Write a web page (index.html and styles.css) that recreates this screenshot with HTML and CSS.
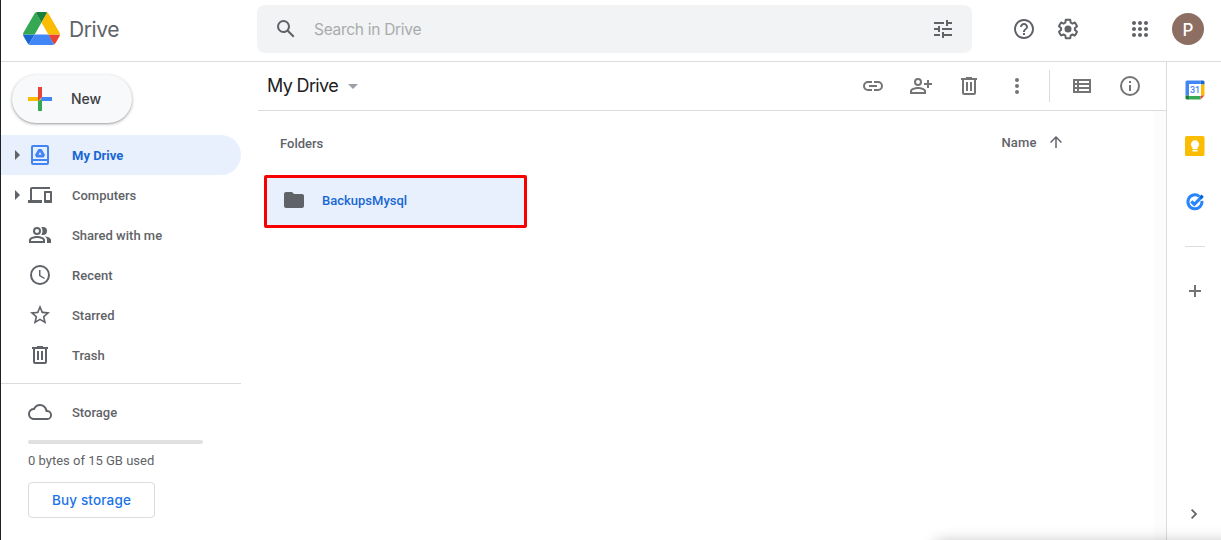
FILE: index.html
```html
<!DOCTYPE html>
<html lang="en">
<head>
<meta charset="utf-8">
<title>My Drive</title>
<link rel="stylesheet" href="styles.css">
</head>
<body>
<header class="header">
  <div class="brand">
    <svg class="logo" viewBox="0 0 87.3 78"><path d="m6.6 66.85 3.85 6.65c.8 1.4 1.95 2.5 3.3 3.3l13.75-23.8h-27.5c0 1.55.4 3.1 1.2 4.5z" fill="#1967d2"/><path d="m43.65 25-13.75-23.8c-1.35.8-2.5 1.9-3.3 3.3l-25.4 44a9.06 9.06 0 0 0 -1.2 4.5h27.5z" fill="#34a853"/><path d="m73.55 76.8c1.35-.8 2.5-1.9 3.3-3.3l1.6-2.75 7.65-13.25c.8-1.4 1.2-2.95 1.2-4.5h-27.5l5.85 11.5z" fill="#ea4335"/><path d="m43.65 25 13.75-23.8c-1.35-.8-2.9-1.2-4.5-1.2h-18.5c-1.6 0-3.15.45-4.5 1.2z" fill="#188038"/><path d="m59.8 53h-32.3l-13.75 23.8c1.35.8 2.9 1.2 4.5 1.2h50.8c1.6 0 3.15-.45 4.5-1.2z" fill="#4285f4"/><path d="m73.4 26.5-12.7-22c-.8-1.4-1.95-2.5-3.3-3.3l-13.75 23.8 16.15 28h27.45c0-1.55-.4-3.1-1.2-4.5z" fill="#fbbc04"/></svg>
    <span class="brand-name">Drive</span>
  </div>
  <div class="search">
    <svg class="icon" viewBox="0 0 24 24"><path d="M20.49 19l-5.73-5.73C15.53 12.2 16 10.91 16 9.5A6.5 6.5 0 1 0 9.5 16c1.41 0 2.7-.47 3.77-1.24L19 20.49 20.49 19zM5 9.5C5 7.01 7.01 5 9.5 5S14 7.01 14 9.5 11.99 14 9.5 14 5 11.99 5 9.5z"/></svg>
    <span class="placeholder">Search in Drive</span>
    <svg class="icon" viewBox="0 0 24 24"><path d="M3 17v2h6v-2H3zM3 5v2h10V5H3zm10 16v-2h8v-2h-8v-2h-2v6h2zM7 9v2H3v2h4v2h2V9H7zm14 4v-2H11v2h10zm-6-4h2V7h4V5h-4V3h-2v6z"/></svg>
  </div>
  <div class="account">
    <svg class="icon" viewBox="0 0 24 24"><path d="M11 18h2v-2h-2v2zm1-16C6.48 2 2 6.48 2 12s4.48 10 10 10 10-4.48 10-10S17.52 2 12 2zm0 18c-4.41 0-8-3.59-8-8s3.59-8 8-8 8 3.59 8 8-3.59 8-8 8zm0-14c-2.21 0-4 1.79-4 4h2c0-1.1.9-2 2-2s2 .9 2 2c0 2-3 1.75-3 5h2c0-2.25 3-2.5 3-5 0-2.21-1.79-4-4-4z"/></svg>
    <svg class="icon" viewBox="0 0 24 24"><path d="M13.85 22.25h-3.7c-.74 0-1.36-.54-1.45-1.27l-.27-1.89c-.27-.14-.53-.29-.79-.46l-1.8.72c-.7.26-1.47-.03-1.81-.65L2.2 15.53c-.35-.66-.2-1.44.36-1.88l1.53-1.19c-.01-.15-.02-.3-.02-.46 0-.15.01-.31.02-.46l-1.52-1.19c-.59-.45-.74-1.26-.37-1.88l1.85-3.19c.34-.62 1.11-.9 1.79-.63l1.81.73c.26-.17.52-.32.78-.46l.27-1.91c.09-.7.71-1.25 1.44-1.25h3.7c.74 0 1.36.54 1.45 1.27l.27 1.89c.27.14.53.29.79.46l1.8-.72c.71-.26 1.48.03 1.82.65l1.84 3.18c.36.66.2 1.44-.36 1.88l-1.52 1.19c.01.15.02.3.02.46s-.01.31-.02.46l1.52 1.19c.56.45.72 1.23.37 1.86l-1.86 3.22c-.34.62-1.11.9-1.8.63l-1.8-.72c-.26.17-.52.32-.78.46l-.27 1.91c-.1.68-.72 1.22-1.46 1.22zm-3.23-2h2.76l.37-2.55.53-.22c.44-.18.88-.44 1.34-.78l.45-.34 2.38.96 1.38-2.4-2.03-1.58.07-.56c.03-.26.06-.51.06-.78s-.03-.53-.06-.78l-.07-.56 2.03-1.58-1.39-2.4-2.39.96-.45-.35c-.42-.32-.87-.58-1.33-.77l-.52-.22-.37-2.55h-2.76l-.37 2.55-.53.21c-.44.19-.88.44-1.34.79l-.45.33-2.38-.95-1.39 2.39 2.03 1.58-.07.56a7 7 0 0 0-.06.79c0 .26.02.53.06.78l.07.56-2.03 1.58 1.38 2.4 2.39-.96.45.35c.43.33.86.58 1.33.77l.53.22.38 2.55z"/><circle cx="12" cy="12" r="3.5"/></svg>
    <svg class="icon apps" viewBox="0 0 24 24"><path d="M6 8c1.1 0 2-.9 2-2s-.9-2-2-2-2 .9-2 2 .9 2 2 2zm6 12c1.1 0 2-.9 2-2s-.9-2-2-2-2 .9-2 2 .9 2 2 2zm-6 0c1.1 0 2-.9 2-2s-.9-2-2-2-2 .9-2 2 .9 2 2 2zm0-6c1.1 0 2-.9 2-2s-.9-2-2-2-2 .9-2 2 .9 2 2 2zm6 0c1.1 0 2-.9 2-2s-.9-2-2-2-2 .9-2 2 .9 2 2 2zm4-8c0 1.1.9 2 2 2s2-.9 2-2-.9-2-2-2-2 .9-2 2zm-4 2c1.1 0 2-.9 2-2s-.9-2-2-2-2 .9-2 2 .9 2 2 2zm6 6c1.1 0 2-.9 2-2s-.9-2-2-2-2 .9-2 2 .9 2 2 2zm0 6c1.1 0 2-.9 2-2s-.9-2-2-2-2 .9-2 2 .9 2 2 2z"/></svg>
    <span class="avatar">P</span>
  </div>
</header>
<div class="body">
  <nav class="sidebar">
    <button class="new">
      <svg viewBox="0 0 24 24"><path fill="#ea4335" d="M10 0h4v10l-4 4z"/><path fill="#4285f4" d="M24 10v4H12l2-4z"/><path fill="#34a853" d="M10 14l4-2v12h-4z"/><path fill="#fbbc04" d="M0 10h10v4H0z"/><path fill="#ea4335" d="M10 10h4l-4 4z"/></svg>
      <span>New</span>
    </button>
    <a class="item selected"><i class="caret"></i>
      <svg class="icon" viewBox="0 0 24 24"><path fill-rule="evenodd" d="M5 2h14a2 2 0 0 1 2 2v16a2 2 0 0 1-2 2H5a2 2 0 0 1-2-2V4c0-1.1.9-2 2-2zm0 2v12h14V4zm0 14v2h14v-2z"/><path fill-rule="evenodd" d="M10.400 6h3.200l3.500 6-1.500 2.500H8.400L6.900 12zM12 9l-1.500 2.700h3z"/></svg>
      <span>My Drive</span></a>
    <a class="item"><i class="caret"></i>
      <svg class="icon" viewBox="0 0 24 24"><path d="M4 6h18V4H4c-1.1 0-2 .9-2 2v11H0v3h14v-3H4V6zm19 2h-6c-.55 0-1 .45-1 1v10c0 .55.45 1 1 1h6c.55 0 1-.45 1-1V9c0-.55-.45-1-1-1zm-1 9h-4v-7h4v7z"/></svg>
      <span>Computers</span></a>
    <a class="item"><i class="caret none"></i>
      <svg class="icon" viewBox="0 0 24 24"><path d="M9 12a4 4 0 1 0 0-8 4 4 0 0 0 0 8zm0-6a2 2 0 1 1 0 4 2 2 0 0 1 0-4zm0 7c-2.67 0-8 1.34-8 4v3h16v-3c0-2.66-5.33-4-8-4zm6 5H3v-1c0-.72 3.1-2 6-2s6 1.28 6 2v1zM15 12a4 4 0 1 0 0-8c-.6 0-1.15.14-1.66.36A6 6 0 0 1 14.5 8a6 6 0 0 1-1.16 3.64c.51.22 1.06.36 1.66.36zM16.5 13.2c1.5.9 2.5 2.1 2.5 3.8v3h4v-3c0-2.1-3.3-3.4-6.5-3.8z"/></svg>
      <span>Shared with me</span></a>
    <a class="item"><i class="caret none"></i>
      <svg class="icon" viewBox="0 0 24 24"><path d="M12 2a10 10 0 1 0 0 20 10 10 0 0 0 0-20zm0 18a8 8 0 1 1 0-16 8 8 0 0 1 0 16zm.5-13H11v6l5.2 3.1.8-1.2-4.5-2.7z"/></svg>
      <span>Recent</span></a>
    <a class="item"><i class="caret none"></i>
      <svg class="icon" viewBox="0 0 24 24"><path d="M22 9.24l-7.19-.62L12 2 9.19 8.63 2 9.24l5.46 4.73L5.82 21 12 17.27 18.18 21l-1.63-7.03zM12 15.4l-3.76 2.27 1-4.28-3.32-2.88 4.38-.38L12 6.1l1.71 4.04 4.38.38-3.32 2.88 1 4.28z"/></svg>
      <span>Starred</span></a>
    <a class="item"><i class="caret none"></i>
      <svg class="icon" viewBox="0 0 24 24"><path d="M15 4V3H9v1H4v2h1v13a2 2 0 0 0 2 2h10a2 2 0 0 0 2-2V6h1V4zm2 15H7V6h10zM9 8h2v9H9zm4 0h2v9h-2z"/></svg>
      <span>Trash</span></a>
    <div class="storage">
      <a class="item"><i class="caret none"></i>
        <svg class="icon" viewBox="0 0 24 24"><path d="M19.35 10.04A7.49 7.49 0 0 0 12 4C9.11 4 6.6 5.64 5.35 8.04A5.99 5.99 0 0 0 0 14c0 3.31 2.69 6 6 6h13c2.76 0 5-2.24 5-5 0-2.64-2.05-4.78-4.65-4.96zM19 18H6a4 4 0 0 1-.44-7.97l1.07-.11.5-.95A5.48 5.48 0 0 1 12 6c2.62 0 4.88 1.86 5.39 4.43l.3 1.5 1.53.11A2.98 2.98 0 0 1 19 18z"/></svg>
        <span>Storage</span></a>
      <div class="meter"></div>
      <p class="usage">0 bytes of 15 GB used</p>
      <button class="buy">Buy storage</button>
    </div>
  </nav>
  <main class="main">
    <div class="toolbar">
      <h1 class="title">My Drive</h1><i class="dropdown"></i>
      <div class="actions">
        <svg class="icon" viewBox="0 0 24 24"><path d="M17 7h-4v2h4a3 3 0 0 1 0 6h-4v2h4a5 5 0 0 0 0-10zm-6 8H7a3 3 0 0 1 0-6h4V7H7a5 5 0 0 0 0 10h4zm-3-4h8v2H8z"/></svg>
        <svg class="icon" viewBox="0 0 24 24"><path d="M9 12a4 4 0 1 0 0-8 4 4 0 0 0 0 8zm0-6a2 2 0 1 1 0 4 2 2 0 0 1 0-4zm0 7c-2.67 0-8 1.34-8 4v3h16v-3c0-2.66-5.33-4-8-4zm6 5H3v-1c0-.72 3.1-2 6-2s6 1.28 6 2zM20 9V6h-2v3h-3v2h3v3h2v-3h3V9z"/></svg>
        <svg class="icon" viewBox="0 0 24 24"><path d="M15 4V3H9v1H4v2h1v13a2 2 0 0 0 2 2h10a2 2 0 0 0 2-2V6h1V4zm2 15H7V6h10zM9 8h2v9H9zm4 0h2v9h-2z"/></svg>
        <svg class="icon" viewBox="0 0 24 24"><circle cx="12" cy="6" r="2"/><circle cx="12" cy="12" r="2"/><circle cx="12" cy="18" r="2"/></svg>
        <span class="separator"></span>
        <svg class="icon" viewBox="0 0 24 24"><path fill-rule="evenodd" d="M3 5h18v14H3zm2 2v2h2V7zm4 0v2h10V7zm-4 4v2h2v-2zm4 0v2h10v-2zm-4 4v2h2v-2zm4 0v2h10v-2z"/></svg>
        <svg class="icon" viewBox="0 0 24 24"><path d="M11 7h2v2h-2zm0 4h2v6h-2zm1-9a10 10 0 1 0 0 20 10 10 0 0 0 0-20zm0 18a8 8 0 1 1 0-16 8 8 0 0 1 0 16z"/></svg>
      </div>
    </div>
    <div class="content">
      <section class="files">
        <div class="list-head">
          <h2>Folders</h2>
          <div class="sort"><span>Name</span><svg viewBox="0 0 24 24"><path d="M4 12l1.41 1.41L11 7.83V20h2V7.83l5.58 5.59L20 12l-8-8z"/></svg></div>
        </div>
        <div class="folder">
          <svg class="icon" viewBox="0 0 24 24"><path d="M10 4H4c-1.1 0-2 .9-2 2v12c0 1.1.9 2 2 2h16c1.1 0 2-.9 2-2V8c0-1.1-.9-2-2-2h-8z"/></svg>
          <span>BackupsMysql</span>
        </div>
      </section>
      <div class="scrollbar"></div>
    </div>
  </main>
  <aside class="panel">
    <svg class="app" viewBox="0 0 20 20"><path fill="#4285f4" d="M2 .5h13.500v4H4.500v11H.5V2A1.500 1.500 0 0 1 2 .5z"/><path fill="#1967d2" d="M15.500.5H18A1.500 1.500 0 0 1 19.500 2v2.500h-4z"/><path fill="#fbbc04" d="M15.500 4.500h4v11h-4z"/><path fill="#34a853" d="M4.500 15.500h11v4h-11z"/><path fill="#188038" d="M.5 15.500h4v4H2A1.500 1.500 0 0 1 .5 18z"/><path fill="#ea4335" d="M15.500 15.500h4l-4 4z"/><path fill="#fff" d="M4 4h12v12H4z"/><text class="date" x="10" y="13.200" text-anchor="middle">31</text></svg>
    <svg class="app" viewBox="0 0 20 20"><rect width="19.500" height="20" rx="1.600" fill="#fbbc04"/><path fill="#fff" d="M7.500 13.200v-1.500a4.100 4.100 0 1 1 5 0v1.500zM7.500 14h5v1.500h-5z"/></svg>
    <svg class="app" viewBox="0 0 20 20"><path fill="none" stroke="#2684fc" stroke-width="3" d="M14.300 4.300A7 7 0 1 0 16.900 9"/><path fill="none" stroke="#2684fc" stroke-width="3.200" d="M6.300 9.300l3 3L17 4.600"/><path fill="#0066da" d="M14 5l2.500-2.500 2.300 2.300L16.500 7z"/></svg>
    <span class="rule"></span>
    <svg class="add" viewBox="0 0 20 20"><path d="M9 4h2v5h5v2h-5v5H9v-5H4V9h5z"/></svg>
    <svg class="collapse" viewBox="0 0 20 20"><path d="M7 6.200L8.200 5l5 5-5 5L7 13.800l3.800-3.800z"/></svg>
  </aside>
</div>
<div class="edge-shadow"></div>
</body>
</html>
```
FILE: styles.css
```css
* { box-sizing: border-box; }
html { height: 540px; overflow: hidden; }
body {
  margin: 0;
  height: 540px;
  overflow: hidden;
  display: flex;
  flex-direction: column;
  border-left: 1px solid #202124;
  background: #fff;
  color: #5f6368;
  font: 500 13px/20px Roboto, sans-serif;
}
svg { display: block; flex: none; }
h1, h2, p { margin: 0; }
button { margin: 0; font: inherit; }
.icon { width: 24px; height: 24px; fill: #5f6368; }

.header {
  display: flex;
  flex: none;
  height: 62px;
  border-bottom: 1px solid #dadce0;
}
.brand { display: flex; width: 256px; padding: 12px 0 0 21.500px; }
.logo { width: 37px; height: 33px; }
.brand-name {
  margin-left: 9.500px;
  font: 400 21px/36px Inter, sans-serif;
  letter-spacing: -0.4px;
}
.search {
  display: flex;
  align-items: center;
  width: 715px;
  height: 48px;
  margin-top: 5px;
  padding: 0 17px;
  border-radius: 8px;
  background: #f1f3f4;
}
.placeholder {
  flex: 1;
  margin-left: 16px;
  padding-top: 2px;
  color: #a9abad;
  font: 400 15.500px/24px Inter, sans-serif;
  letter-spacing: -.29px;
}
.account { display: flex; align-items: center; height: 58px; margin-left: 40px; gap: 20px; }
.apps { margin-left: 28px; }
.avatar {
  width: 32px;
  height: 32px;
  border-radius: 50%;
  background: #8d6e63;
  color: #fff;
  font: 500 17px/34px Inter, sans-serif;
  text-align: center;
}

.body { display: flex; flex: 1; min-height: 0; }
.sidebar { width: 240px; flex: none; }
.new {
  display: flex;
  align-items: center;
  gap: 19px;
  width: 120px;
  height: 48px;
  margin: 13px 0 12px 11px;
  padding: 0 16px;
  border: 0;
  border-radius: 24px;
  background: #f8f9fb;
  box-shadow: 0 1px 2px rgba(60,64,67,.35), 0 1px 3px 1px rgba(60,64,67,.15);
  color: #3c4043;
  font: 500 14px/20px Inter, sans-serif;
  letter-spacing: -.1px;
}
.new svg { width: 24px; height: 24px; }
.item { display: flex; align-items: center; height: 40px; padding-left: 14px; }
.item .icon { margin: 0 20px 0 8px; }
.item span { padding-top: 2px; }
.caret {
  width: 5px;
  border: solid transparent;
  border-width: 5px 0 5px 5px;
  border-left-color: #5f6368;
}
.caret.none { visibility: hidden; }
.selected { border-radius: 0 20px 20px 0; background: #e8f0fe; color: #1967d2; font-weight: 700; }
.selected .icon { fill: #4285f4; }
.storage { margin-top: 8px; padding-top: 8px; border-top: 1px solid #dadce0; }
.meter { width: 175px; height: 4px; margin: 8px 0 0 27px; border-radius: 2px; background: #e0e0e0; }
.usage { margin: 7px 0 11px 27px; font-weight: 400; }
.buy {
  width: 127px;
  height: 36px;
  margin-left: 27px;
  padding: 0;
  border: 1px solid #dadce0;
  border-radius: 4px;
  background: #fff;
  color: #1a73e8;
  font: 500 13.500px/20px Inter, sans-serif;
  letter-spacing: .15px;
}

.main { display: flex; flex-direction: column; flex: 1; margin-left: 17px; }
.toolbar {
  display: flex;
  align-items: center;
  height: 49px;
  padding: 0 24px 0 9px;
  border-bottom: 1px solid #dadce0;
}
.title { width: 71px; color: #202124; font: 400 18px/24px Inter, sans-serif; letter-spacing: -.65px; white-space: nowrap; }
.dropdown {
  margin: 1px 0 0 10px;
  border: solid transparent;
  border-width: 5px 5px 0;
  border-top-color: #9aa0a6;
}
.actions { display: flex; align-items: center; gap: 24px; margin-left: auto; }
.actions .icon { fill: #747474; }
.separator { width: 1px; height: 32px; margin: 0 -4px 0 -4px; background: #dadce0; }
.content { display: flex; flex: 1; }
.files { flex: 1; padding: 21px 0 0 6px; }
.list-head { display: flex; justify-content: space-between; padding: 0 89px 0 16px; }
h2 { font: 500 13px/24px Roboto, sans-serif; }
.sort { display: flex; align-items: center; gap: 10.500px; height: 21px; letter-spacing: .15px; }
.sort svg { width: 18px; height: 18px; margin-top: -2px; fill: #5f6368; }
.folder {
  display: flex;
  align-items: center;
  gap: 16px;
  width: 263px;
  height: 53px;
  margin-top: 19px;
  padding: 0 0 3px 15px;
  border: 3px solid #f80000;
  border-radius: 2px;
  background: #e8f0fe;
  color: #1967d2;
}
.folder span { padding-top: 2px; }
.scrollbar { width: 12px; background: #fcfcfc; }

.panel {
  display: flex;
  flex-direction: column;
  align-items: center;
  width: 55px;
  padding: 18px 0 0 2px;
  border-left: 1px solid #dadce0;
}
.app { width: 20px; height: 20px; margin-bottom: 36px; }
.date { fill: #4285f4; font: 500 9px Roboto, sans-serif; }
.rule { width: 20px; height: 1px; margin-top: -2px; background: #dadce0; }
.add { width: 20px; height: 20px; margin-top: 34px; fill: #747474; }
.collapse { width: 20px; height: 20px; margin: auto 2px 16px 0; fill: #5f6368; }

/* Shadow of the collapsed tray that sits just below the window edge. */
.edge-shadow {
  position: absolute;
  top: 543px;
  left: 936px;
  width: 330px;
  height: 20px;
  box-shadow: 0 0 16px rgba(0,0,0,.3);
}
```
